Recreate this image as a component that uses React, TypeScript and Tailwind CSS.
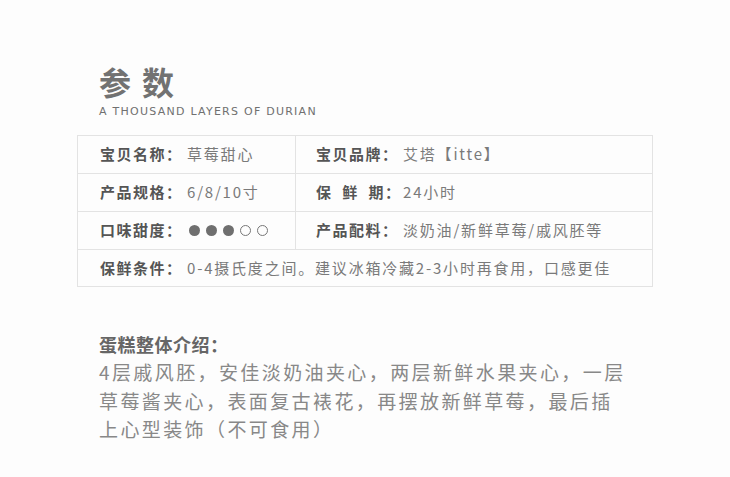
import React from "react";

const cjk = { fontFamily: '"Noto Sans CJK SC", "Noto Sans", sans-serif' };

function Dots() {
  return (
    <span className="inline-flex items-center gap-[6px] ml-[2px]">
      <span className="w-[11px] h-[11px] rounded-full bg-[#6f6f6f]" />
      <span className="w-[11px] h-[11px] rounded-full bg-[#6f6f6f]" />
      <span className="w-[11px] h-[11px] rounded-full bg-[#6f6f6f]" />
      <span className="w-[11px] h-[11px] rounded-full border border-[#777]" />
      <span className="w-[11px] h-[11px] rounded-full border border-[#777]" />
    </span>
  );
}

function Cell({ label, children, right }: { label: string; children: React.ReactNode; right?: boolean }) {
  return (
    <div className={`flex items-center h-[37px] ${right ? "pl-[20px]" : "pl-[22px] border-r border-[#e3e3e3]"}`}>
      <span className="text-[15px] font-bold text-[#555] tracking-[1.5px] w-[87px] shrink-0 whitespace-pre">{label}</span>
      <span className="text-[15px] text-[#7a7a7a] tracking-[1.8px] flex items-center whitespace-nowrap">{children}</span>
    </div>
  );
}

export default function App() {
  return (
    <div className="w-[730px] h-[477px] bg-[#fdfdfd] overflow-hidden" style={cjk}>
      <div className="pl-[99px] pt-[62px]">
        <div className="text-[32px] leading-[38px] font-bold text-[#727272] tracking-[11px]">参数</div>
        <div
          className="text-[11px] leading-[14px] text-[#707070] tracking-[1.25px] mt-[5px]"
          style={{ fontFamily: '"DejaVu Sans", sans-serif' }}
        >
          A THOUSAND LAYERS OF DURIAN
        </div>
      </div>
      <div className="ml-[77px] mt-[16px] w-[576px] border border-[#e3e3e3]">
        <div className="grid grid-cols-[218px_1fr] border-b border-[#e3e3e3]">
          <Cell label="宝贝名称：">草莓甜心</Cell>
          <Cell label="宝贝品牌：" right>艾塔【itte】</Cell>
        </div>
        <div className="grid grid-cols-[218px_1fr] border-b border-[#e3e3e3]">
          <Cell label="产品规格：">6/8/10寸</Cell>
          <Cell label="保  鲜  期：" right>24小时</Cell>
        </div>
        <div className="grid grid-cols-[218px_1fr] border-b border-[#e3e3e3]">
          <Cell label="口味甜度：">
            <Dots />
          </Cell>
          <Cell label="产品配料：" right>淡奶油/新鲜草莓/戚风胚等</Cell>
        </div>
        <div className="flex items-center h-[36px] pl-[22px]">
          <span className="text-[15px] font-bold text-[#555] tracking-[1.5px] w-[87px] shrink-0">保鲜条件：</span>
          <span className="text-[15px] text-[#7a7a7a] tracking-[1.8px] whitespace-nowrap">0-4摄氏度之间。建议冰箱冷藏2-3小时再食用，口感更佳</span>
        </div>
      </div>
      <div className="pl-[99px] pt-[45px]">
        <div className="text-[18px] leading-[24px] font-bold text-[#666] tracking-[0.5px]">蛋糕整体介绍：</div>
        <div className="text-[19px] leading-[28.5px] text-[#888] tracking-[2.4px] mt-[2px] whitespace-nowrap">
          <div>4层戚风胚，安佳淡奶油夹心，两层新鲜水果夹心，一层</div>
          <div>草莓酱夹心，表面复古裱花，再摆放新鲜草莓，最后插</div>
          <div>上心型装饰（不可食用）</div>
        </div>
      </div>
    </div>
  );
}
